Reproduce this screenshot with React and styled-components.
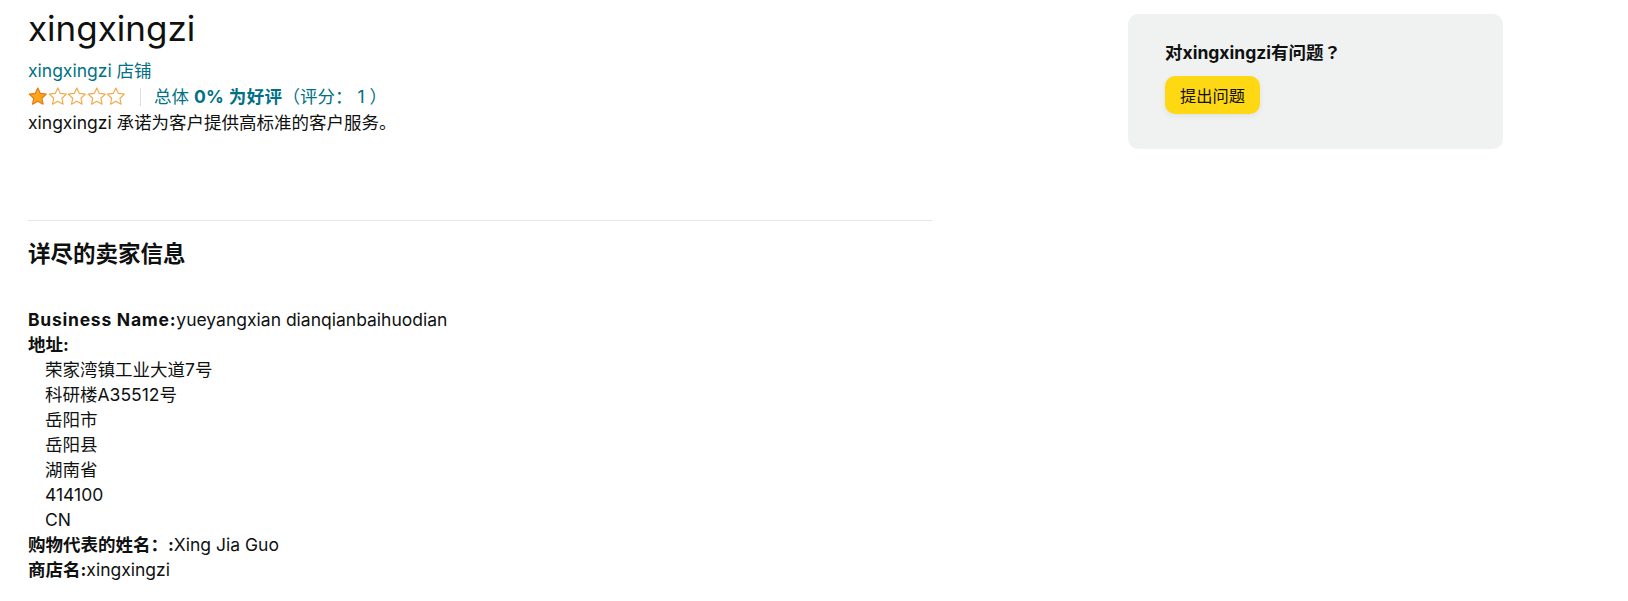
import React from 'react';
import styled, { createGlobalStyle } from 'styled-components';

const GlobalStyle = createGlobalStyle`
  body {
    margin: 0;
    background: #ffffff;
    color: #0F1111;
    font-family: Inter, "Noto Sans CJK SC", sans-serif;
    font-size: 17.5px;
    line-height: 25px;
  }
`;

const Page = styled.div`
  display: flex;
  align-items: flex-start;
  gap: 196px;
  padding: 6px 0 0 28px;
`;

const Main = styled.div`
  width: 904px;
  display: flex;
  flex-direction: column;
`;

const Title = styled.h1`
  margin: 0 0 7px;
  font-size: 35px;
  line-height: 45px;
  font-weight: 400;
`;

const StoreLink = styled.a`
  color: #007185;
  text-decoration: none;
  line-height: 25px;
`;

const RatingRow = styled.div`
  display: flex;
  align-items: center;
  height: 27px;
  color: #007185;
`;

const Stars = styled.div`
  display: flex;
  align-items: center;
`;

const Divider = styled.span`
  width: 1px;
  height: 18px;
  background: #DDDDDD;
  margin: 0 13px 0 14px;
`;

const Strong = styled.b`
  font-weight: 700;
  letter-spacing: 0.4px;
`;

const Line = styled.div`
  line-height: 25px;
`;

const Rule = styled.hr`
  margin: 85px 0 0;
  border: none;
  border-top: 1px solid #E7E7E7;
  height: 0;
`;

const SectionTitle = styled.h2`
  margin: 18px 0 38px;
  font-size: 22.5px;
  line-height: 30px;
  font-weight: 700;
`;

const Label = styled.span`
  font-weight: 700;
  letter-spacing: ${p => (p.$latin ? '0.75px' : '0')};
`;

const Indented = styled.div`
  padding-left: 17px;
  line-height: 25px;
`;

const Card = styled.div`
  box-sizing: border-box;
  width: 375px;
  height: 135px;
  margin-top: 8px;
  padding: 25px 37px;
  background: #F0F2F2;
  border-radius: 10px;
`;

const CardTitle = styled.div`
  font-weight: 700;
  line-height: 25px;
`;

const Punct = styled.span`
  font-family: "Noto Sans CJK JP", sans-serif;
`;

const AskButton = styled.button`
  margin-top: 11px;
  height: 38px;
  padding: 0 15px;
  border: none;
  border-radius: 10px;
  background: #FFD814;
  box-shadow: 0 2px 5px 0 rgba(213, 217, 217, 0.6);
  color: #0F1111;
  font-family: inherit;
  font-size: 16.25px;
  cursor: pointer;
`;

const STAR = 'M10 1 L12.7 6.78 L19.03 7.56 L14.37 11.92 L15.59 18.19 L10 15.1 L4.41 18.19 L5.63 11.92 L0.97 7.56 L7.3 6.78 Z';

function Star({ filled }) {
  return (
    <svg width="19.6" height="18.4" viewBox="0 0 20 19.5">
      <path
        d={STAR}
        fill={filled ? '#FFA41C' : '#ffffff'}
        stroke={filled ? '#E47911' : '#F3A847'}
        strokeWidth="1.2"
        strokeLinejoin="round"
      />
    </svg>
  );
}

const address = ['荣家湾镇工业大道7号', '科研楼A35512号', '岳阳市', '岳阳县', '湖南省', '414100', 'CN'];

export default function App() {
  return (
    <>
      <GlobalStyle />
      <Page>
        <Main>
          <Title>xingxingzi</Title>
          <StoreLink href="#">xingxingzi 店铺</StoreLink>
          <RatingRow>
            <Stars>
              {[0, 1, 2, 3, 4].map(i => <Star key={i} filled={i === 0} />)}
            </Stars>
            <Divider />
            <span>总体 <Strong>0% 为好评</Strong>（评分： 1 ）</span>
          </RatingRow>
          <Line>xingxingzi 承诺为客户提供高标准的客户服务。</Line>
          <Rule />
          <SectionTitle>详尽的卖家信息</SectionTitle>
          <Line><Label $latin>Business Name:</Label>yueyangxian dianqianbaihuodian</Line>
          <Line><Label>地址:</Label></Line>
          {address.map(a => <Indented key={a}>{a}</Indented>)}
          <Line><Label>购物代表的姓名：:</Label>Xing Jia Guo</Line>
          <Line><Label>商店名:</Label>xingxingzi</Line>
        </Main>
        <Card>
          <CardTitle>对xingxingzi有问题<Punct>？</Punct></CardTitle>
          <AskButton>提出问题</AskButton>
        </Card>
      </Page>
    </>
  );
}
